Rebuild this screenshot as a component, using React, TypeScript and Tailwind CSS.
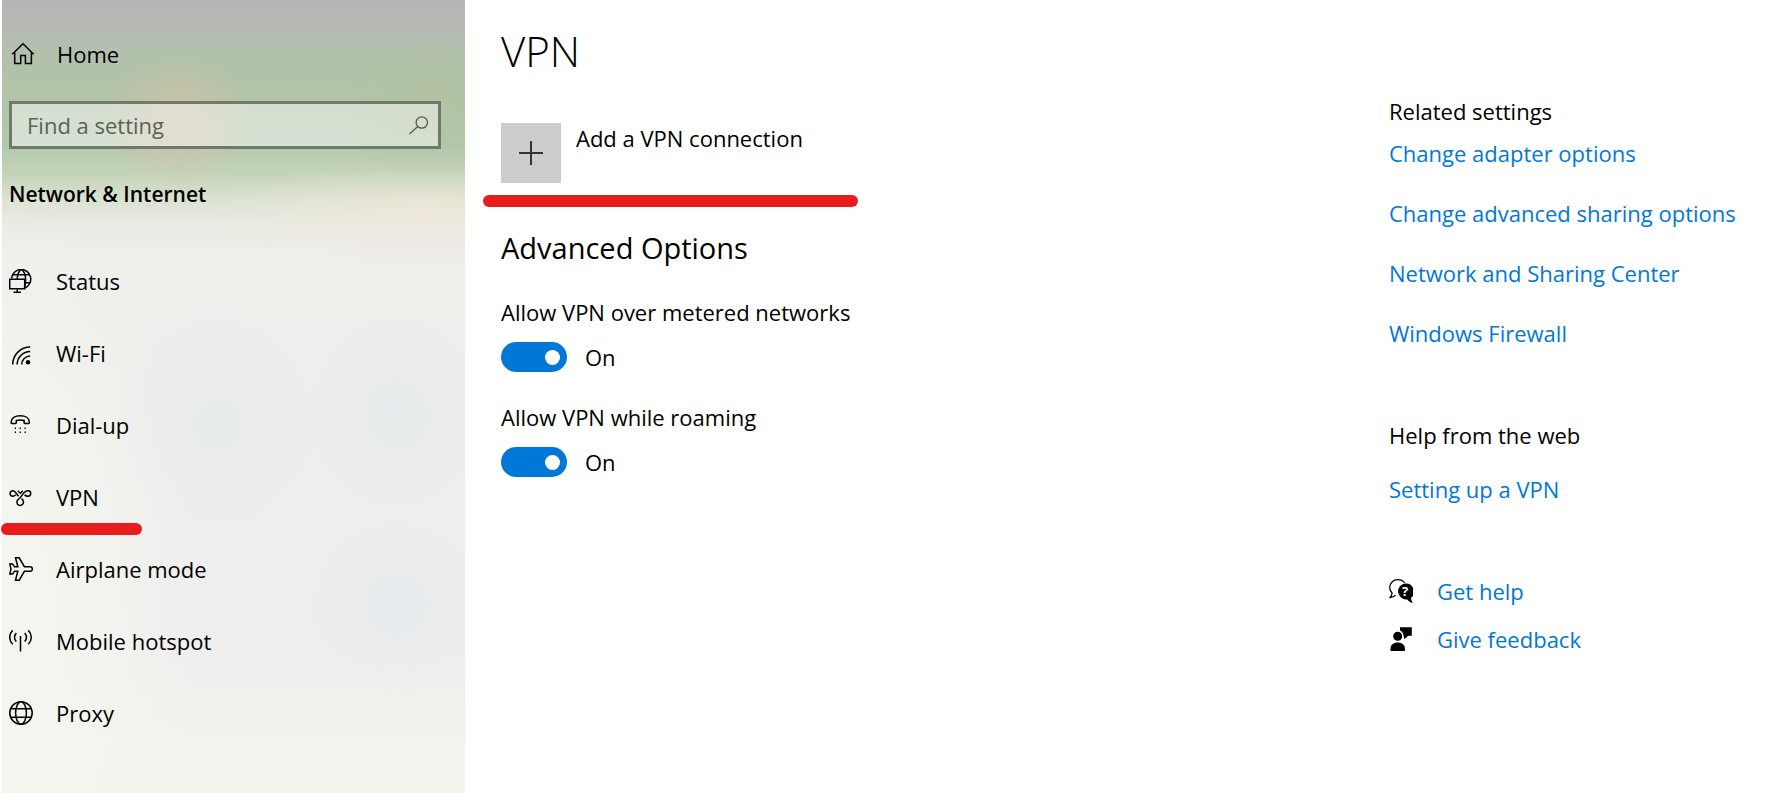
import { useState } from "react";
import type { ReactNode } from "react";

function Icon({ children }: { children: ReactNode }) {
  return (
    <svg
      viewBox="0 0 24 24"
      className="w-6 h-6 shrink-0"
      fill="none"
      stroke="currentColor"
      strokeWidth="1.5"
      aria-hidden="true"
    >
      {children}
    </svg>
  );
}

const navItems = [
  {
    label: "Status",
    icon: (
      <Icon>
        <path d="M2.6 9.2A9.6 9.6 0 1 1 15.8 19M3.6 5.8H21M16 13.8h5.4" />
        <path d="M12 .5C9.2 3 8.4 6 8.2 9.8M12.6 .5c3 2.5 4 6 4 9.5 0 3.2-.4 6-1.2 8.8" />
        <path d="M.7 10.2h15v9.6H.7zM8.2 19.8v3M4.5 23.2H12" />
      </Icon>
    ),
  },
  {
    label: "Wi-Fi",
    icon: (
      <Icon>
        <path d="M3.7 23.5A17.5 17.5 0 0 1 21.2 6M8.2 23.5a13 13 0 0 1 13-13M12.7 23.5a8.5 8.5 0 0 1 8.5-8.5" />
        <circle cx="19" cy="21.3" r="2.2" fill="currentColor" stroke="none" />
      </Icon>
    ),
  },
  {
    label: "Dial-up",
    icon: (
      <Icon>
        <path d="M2.2 9C2.2 5 6 2.8 11.2 2.8S20.3 5 20.3 9v.8q0 .6-.6.6h-4q-.6 0-.6-.6V7.5c-2.5-.7-5.3-.7-7.8 0v2.3q0 .6-.6.6h-4q-.6 0-.6-.6z" />
        <path d="M5.7 15.2H7M10.6 15.2h1.3M15.5 15.2h1.3M5.7 19.2H7M10.6 19.2h1.3M15.5 19.2h1.3" />
      </Icon>
    ),
  },
  {
    label: "VPN",
    marked: true,
    icon: (
      <Icon>
        <path d="M9.6 11.3C8 9.6 6.3 5.8 3.8 5.8a2.7 2.7 0 1 0 0 5.4c1.2 0 2-.5 2.9-1.5" />
        <path d="M15.6 9.9c.9.9 2 1.3 3.4 1.3a2.7 2.7 0 0 0 0-5.4c-5 0-6 6.6-9.7 8.6a3.3 3.3 0 1 0 5.2 2.6c0-1.6-.8-2.4-2-3.3" />
        <path d="M8.7 5.8l2.6 2.4 2.6-2.4" />
      </Icon>
    ),
  },
  {
    label: "Airplane mode",
    icon: (
      <Icon>
        <path d="M6.5.8h3.7l5.2 8.9h5.9c2.7 0 2.7 4.6 0 4.6h-5.9l-5.2 8.9H6.5l2.3-8.9H5.5l-2 2.8H.8L2 12 .8 6.9h2.7l2 2.8h3.3z" />
      </Icon>
    ),
  },
  {
    label: "Mobile hotspot",
    icon: (
      <Icon>
        <path d="M11.5 7v15.5M3.7 1.2c-4 4.3-4 9.8 0 14M19.3 1.2c4 4.3 4 9.8 0 14M7.3 4c-2.3 2.7-2.3 5.8 0 8.5M15.7 4c2.3 2.7 2.3 5.8 0 8.5" />
      </Icon>
    ),
  },
  {
    label: "Proxy",
    icon: (
      <Icon>
        <circle cx="12" cy="12" r="11.2" />
        <ellipse cx="12" cy="12" rx="5.4" ry="11.2" />
        <path d="M1.6 7.8h20.8M1.6 16.2h20.8" />
      </Icon>
    ),
  },
];

const relatedLinks = [
  "Change adapter options",
  "Change advanced sharing options",
  "Network and Sharing Center",
  "Windows Firewall",
];

function Toggle({ id, label }: { id: string; label: string }) {
  const [on, setOn] = useState(true);

  return (
    <div className="mt-[30px]">
      <label htmlFor={id} className="block">{label}</label>
      <div className="mt-[15px] flex items-center gap-[18px]">
        <input
          id={id}
          type="checkbox"
          role="switch"
          checked={on}
          onChange={(e) => setOn(e.target.checked)}
          className="appearance-none w-[66px] h-[30px] rounded-full bg-gray-500 checked:bg-[#0078d7] flex items-center justify-start checked:justify-end px-[7px] before:content-[''] before:w-[15px] before:h-[15px] before:rounded-full before:bg-white"
        />
        <span>{on ? "On" : "Off"}</span>
      </div>
    </div>
  );
}

function Sidebar() {
  return (
    <aside className="w-[465px] shrink-0 border-l-2 border-white bg-[radial-gradient(ellipse_75px_65px_at_176px_122px,#dcc0a8a0_0%,#dcc0a870_40%,#dcc0a800_100%),radial-gradient(ellipse_90px_70px_at_430px_110px,#b5bf9870,#b5bf9800),radial-gradient(ellipse_230px_50px_at_420px_215px,#f3e8dcb0,#f3e8dc00),radial-gradient(ellipse_100px_110px_at_215px_425px,#e3e9ed90,#e3e9ed00),radial-gradient(ellipse_90px_100px_at_395px_415px,#e1e8ed90,#e1e8ed00),radial-gradient(ellipse_90px_90px_at_395px_605px,#e1e8ed90,#e1e8ed00),radial-gradient(ellipse_200px_440px_at_0px_620px,#f3f5ee_0%,#f3f5eed0_50%,#f3f5ee00_100%),linear-gradient(to_bottom,#b8b5b5_0px,#b7b8b5_22px,#b2c0ad_48px,#b1c3a7_80px,#b2c8ae_145px,#c3d3b7_172px,#dae2d0_200px,#e9ebe3_225px,#eeeeeb_255px,#eeeeee_650px,#f2f3ec_750px)]">
      <div className="pt-8 pl-[7px] pr-6">
        <a href="#home" className="h-[43px] pl-0.5 flex items-center gap-[22px]">
          <Icon>
            <path d="M1.3 12.2 12 1.7l10.7 10.5M3.7 10v11.5h6v-8h4.7v8h6V10" />
          </Icon>
          Home
        </a>
        <div className="mt-[26px] h-12 flex items-center border-[3px] border-[#6f7b68] bg-white/45 text-[#555a50]">
          <input
            type="search"
            aria-label="Find a setting"
            placeholder="Find a setting"
            className="flex-1 min-w-0 h-10 pl-[15px] bg-transparent outline-none placeholder:text-[#5c6157] placeholder:opacity-100"
          />
          <button type="button" aria-label="Search" className="pr-[7px]">
            <svg viewBox="0 0 24 24" className="w-6 h-6" fill="none" stroke="currentColor" strokeWidth="1.3">
              <circle cx="14.8" cy="9.5" r="5.7" />
              <path d="M10.8 13.5 2.5 21" />
            </svg>
          </button>
        </div>
        <h2 className="h-[90px] flex items-center text-[21px] font-semibold">Network &amp; Internet</h2>
      </div>

      <nav className="pt-1.5">
        {navItems.map((item) => (
          <a
            key={item.label}
            href={"#" + item.label.toLowerCase().replace(" ", "-")}
            className="relative h-[72px] pl-[7px] flex items-center gap-[23px]"
          >
            {item.icon}
            {item.label}
            {item.marked && (
              <span className="absolute -left-px -bottom-0.5 w-[141px] h-3 rounded-full bg-[#e81c1c]" />
            )}
          </a>
        ))}
      </nav>
    </aside>
  );
}

export default function App() {
  return (
    <div className="min-h-screen flex bg-white text-black text-[22px] leading-[30px] font-['Segoe_UI','Open_Sans',sans-serif]">
      <Sidebar />

      <main className="flex-1 min-w-0 pt-[21px] pl-9">
        <h1 className="text-[42px] leading-[60px] font-light">VPN</h1>
        <div className="relative mt-[42px]">
          <button type="button" className="flex items-start gap-[15px] text-left">
            <span className="w-[60px] h-[60px] flex items-center justify-center bg-[#cccccc]">
              <svg viewBox="0 0 24 24" className="w-6 h-6" fill="none" stroke="#333" strokeWidth="2">
                <path d="M12 0v24M0 12h24" />
              </svg>
            </span>
            Add a VPN connection
          </button>
          <span className="absolute -left-[18px] top-[72px] w-[375px] h-3 rounded-full bg-[#e81c1c]" />
        </div>

        <h2 className="mt-[46px] text-[29px] leading-[38px]">Advanced Options</h2>
        <Toggle id="metered" label="Allow VPN over metered networks" />
        <Toggle id="roaming" label="Allow VPN while roaming" />
      </main>

      <aside className="w-[396px] shrink-0 pt-24">
        <h3>Related settings</h3>
        <ul className="mt-3 flex flex-col gap-[30px] text-[#0078d7]">
          {relatedLinks.map((link) => (
            <li key={link}>
              <a href="#related">{link}</a>
            </li>
          ))}
        </ul>

        <h3 className="mt-[72px]">Help from the web</h3>
        <a href="#setup" className="mt-6 block text-[#0078d7]">Setting up a VPN</a>

        <div className="mt-[72px] flex flex-col gap-[18px]">
          <a href="#help" className="flex items-center gap-6 text-[#0078d7]">
            <svg viewBox="0 0 24 24" className="w-6 h-6 text-black" aria-hidden="true">
              <path
                d="M15.6 3.8C14.2 1.8 11.5.7 8.7.7 4.2.7.7 4.2.7 8.5c0 2.4.9 4.2 2.4 5.5-.2 1.8-.9 3.2-2 4.5 2.2-.2 4-.9 5.5-2.2"
                fill="none"
                stroke="currentColor"
                strokeWidth="1.3"
              />
              <path d="M16 4.5a8 8 0 1 0 2.2 15.9c1.5 1.7 3.2 2.9 5.6 3.5-1-1.7-1.7-3.2-1.9-5A8.1 8.1 0 0 0 16 4.5z" fill="currentColor" />
              <text x="16" y="17.3" textAnchor="middle" fontSize="13" fontWeight="700" fill="white">?</text>
            </svg>
            Get help
          </a>
          <a href="#feedback" className="flex items-center gap-6 text-[#0078d7]">
            <svg viewBox="0 0 24 24" className="w-6 h-6 text-black" fill="currentColor" aria-hidden="true">
              <circle cx="8.7" cy="9.2" r="4.5" />
              <path d="M1.5 24v-2.5c0-3.5 2.8-6 7.2-6s7.2 2.5 7.2 6V24z" />
              <path d="M11 .2h11.8v8.6h-3.6l-3.8 3.4-.9-3.6C14.3 6 13 4.2 11 3.4z" />
            </svg>
            Give feedback
          </a>
        </div>
      </aside>
    </div>
  );
}
